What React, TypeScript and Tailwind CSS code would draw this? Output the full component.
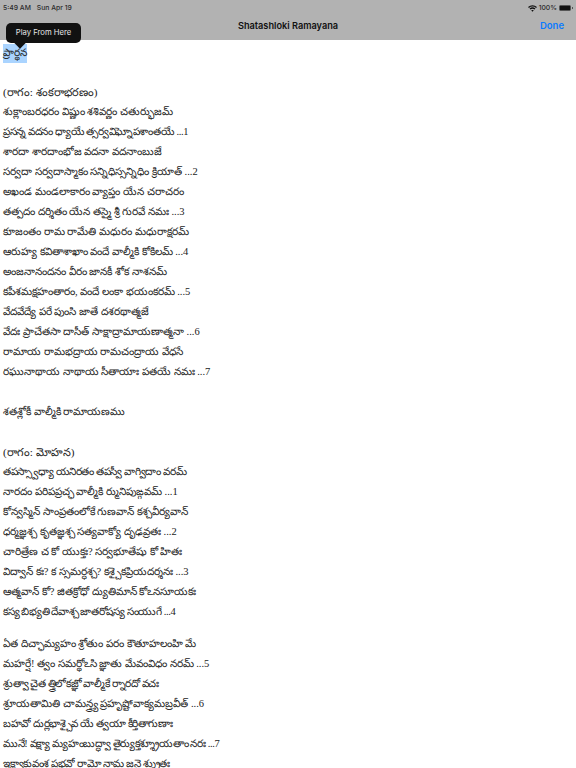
const firstBlock = [
  'శుక్లాంబరధరం విష్ణుం శశివర్ణం చతుర్భుజమ్',
  'ప్రసన్న వదనం ధ్యాయే త్సర్వవిఘ్నోపశాంతయే ...1',
  'శారదా శారదాంభోజ వదనా వదనాంబుజే',
  'సర్వదా సర్వదాస్మాకం సన్నిధిస్సన్నిధిం క్రియాత్ ...2',
  'అఖండ మండలాకారం వ్యాప్తం యేన చరాచరం',
  'తత్పదం దర్శితం యేన తస్మై శ్రీ గురవే నమః ...3',
  'కూజంతం రామ రామేతి మధురం మధురాక్షరమ్',
  'ఆరుహ్య కవితాశాఖాం వందే వాల్మీకి కోకిలమ్ ...4',
  'అంజనానందనం వీరం జానకీ శోక నాశనమ్',
  'కపీశమక్షహంతారం, వందే లంకా భయంకరమ్ ...5',
  'వేదవేద్యే పరే పుంసి జాతే దశరథాత్మజే',
  'వేదః ప్రాచేతసా దాసీత్ సాక్షాద్రామాయణాత్మనా ...6',
  'రామాయ రామభద్రాయ రామచంద్రాయ వేధసే',
  'రఘునాథాయ నాథాయ సీతాయాః పతయే నమః ...7',
]

const secondBlock = [
  'తపస్స్వాధ్యా యనిరతం తపస్వీ వాగ్విదాం వరమ్',
  'నారదం పరిపప్రచ్ఛ వాల్మీకి ర్మునిపుఙ్గవమ్ ...1',
  'కోన్వస్మిన్ సాంప్రతంలోకే గుణవాన్ కశ్చవీర్యవాన్',
  'ధర్మజ్ఞశ్చ కృతజ్ఞశ్చ సత్యవాక్యో దృఢవ్రతః ...2',
  'చారిత్రేణ చ కో యుక్తః? సర్వభూతేషు కో హితః',
  'విద్వాన్ కః? క స్సమర్ధశ్చ? కశ్చైకప్రియదర్శనః ...3',
  'ఆత్మవాన్ కో? జితక్రోధో ద్యుతిమాన్ కోఽనసూయకః',
  'కస్య బిభ్యతి దేవాశ్చ జాతరోషస్య సంయుగే ...4',
]

const thirdBlock = [
  'ఏత దిచ్ఛామ్యహం శ్రోతుం పరం కౌతూహలంహి మే',
  'మహర్షే! త్వం సమర్థోఽసి జ్ఞాతు మేవంవిధం నరమ్ ...5',
  'శ్రుత్వా చైత త్త్రిలోకజ్ఞో వాల్మీకే ర్నారదో వచః',
  'శ్రూయతామితి చామన్త్ర్య ప్రహృష్టోవాక్యమబ్రవీత్ ...6',
  'బహవో దుర్లభాశ్చైవ యే త్వయా కీర్తితాగుణాః',
  'మునే! వక్ష్యా మ్యహంబుద్ధ్వా తైర్యుక్తశ్శ్రూయతాం నరః ...7',
  'ఇక్ష్వాకువంశ ప్రభవో రామో నామ జనై శ్శ్రుతః',
]

// lines that run a little narrower in the reference
const tightLines = [firstBlock[1], secondBlock[0], secondBlock[7], thirdBlock[2], thirdBlock[4], thirdBlock[5], thirdBlock[6]]

function Lines({ items }: { items: string[] }) {
  return (
    <>
      {items.map((line) => (
        <p key={line} className={tightLines.includes(line) ? 'h-5 whitespace-nowrap tracking-[-0.4px]' : 'h-5 whitespace-nowrap'}>
          {line}
        </p>
      ))}
    </>
  )
}

export default function App() {
  return (
    <div className="relative h-[768px] w-[576px] overflow-hidden bg-white font-['Liberation_Serif',serif] text-[10.5px] leading-5 text-[#222]">
      {/* Status + nav bar */}
      <div className="h-10 bg-[#b2b2b2] font-['Inter',sans-serif] text-[#111]">
        <div className="flex h-3 items-center justify-between pl-[3px] pr-[3px] pt-1 text-[6.8px] font-medium text-[#2a2a2a]">
          <div className="flex gap-[6px]">
            <span>5:49 AM</span>
            <span>Sun Apr 19</span>
          </div>
          <div className="flex items-center gap-[2px]">
            <svg width="9" height="7" viewBox="0 0 18 14" fill="none" stroke="#111" strokeWidth="2.6">
              <path d="M1 5 C5.5 0.5 12.5 0.5 17 5" />
              <path d="M4 8.2 C7 5.5 11 5.5 14 8.2" />
              <path d="M9 13.5 L6.6 11 C8 9.8 10 9.8 11.4 11 Z" fill="#111" stroke="none" />
            </svg>
            <span>100%</span>
            <div className="flex items-center gap-[1px]">
              <div className="h-[6px] w-[12px] rounded-[1.5px] border border-[#555] bg-[#111]" />
              <div className="h-[2px] w-[1px] bg-[#555]" />
            </div>
          </div>
        </div>
        <div className="relative flex h-[28px] items-center justify-center">
          <span className="text-[9.2px] font-semibold">Shatashloki Ramayana</span>
          <span className="absolute right-3 top-[6px] text-[9.5px] font-semibold leading-4 text-[#0a7aff]">Done</span>
        </div>
      </div>

      {/* Play tooltip */}
      <div className="absolute left-[6px] top-[23px] z-10 flex h-5 w-[75px] items-center justify-center rounded-[5px] bg-[#111] font-['Inter',sans-serif] text-[7.7px] text-[#e5e5e5]">
        Play From Here
        <div className="absolute left-[10px] top-[16px] h-[8px] w-[8px] rotate-45 bg-[#111]" />
      </div>

      {/* Reading text */}
      <div className="px-[3px] pt-[2px]">
        <p className="mt-[2px] h-[19px] w-fit bg-[#aad4ff] leading-[18px]">ప్రార్థన</p>
        <div className="h-[19px]" />
        <p className="h-5 text-[11.2px]">(రాగం: శంకరాభరణం)</p>
        <Lines items={firstBlock} />
        <div className="h-5" />
        <p className="h-5">శతశ్లోకీ వాల్మీకి రామాయణము</p>
        <div className="h-5" />
        <p className="h-5 text-[11.2px]">(రాగం: మోహన)</p>
        <Lines items={secondBlock} />
        <div className="h-3" />
        <Lines items={thirdBlock} />
      </div>
    </div>
  )
}
